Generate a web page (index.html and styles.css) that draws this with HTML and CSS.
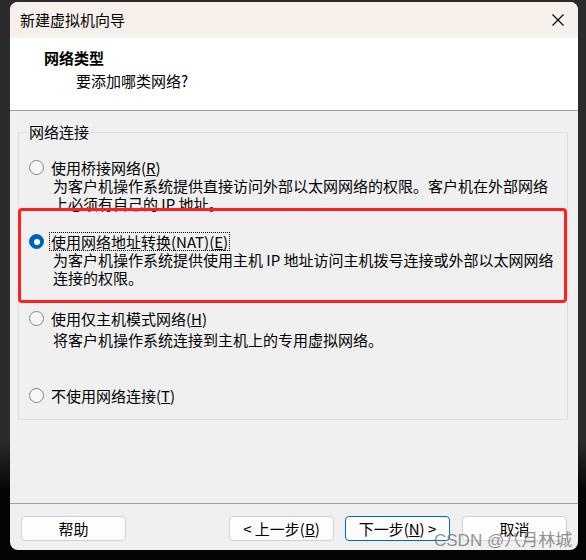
FILE: index.html
```html
<!DOCTYPE html>
<html lang="zh-CN">
<head>
<meta charset="utf-8">
<title>新建虚拟机向导</title>
<link rel="stylesheet" href="styles.css">
</head>
<body>
<div class="window">
  <div class="titlebar">
    <span class="title">新建虚拟机向导</span>
    <svg class="close" width="12" height="12" viewBox="0 0 12 12"><path d="M0.5 0.5 L11.5 11.5 M11.5 0.5 L0.5 11.5" stroke="#000" stroke-width="1.1" fill="none"/></svg>
  </div>
  <div class="header">
    <div class="h-title">网络类型</div>
    <div class="h-sub">要添加哪类网络?</div>
  </div>
  <div class="content">
    <div class="group">
      <div class="group-title">网络连接</div>
      <div class="options">
        <div class="option opt-a">
          <div class="row"><span class="radio"></span><span class="label">使用桥接网络(<u>R</u>)</span></div>
          <div class="desc">为客户机操作系统提供直接访问外部以太网网络的权限。客户机在外部网络<br>上必须有自己的 IP 地址。</div>
        </div>
        <div class="option opt-b">
          <div class="row"><span class="radio on"></span><span class="label focus">使用网络地址转换(NAT)(<u>E</u>)</span></div>
          <div class="desc">为客户机操作系统提供使用主机 IP 地址访问主机拨号连接或外部以太网网络<br>连接的权限。</div>
        </div>
        <div class="option opt-b">
          <div class="row"><span class="radio"></span><span class="label">使用仅主机模式网络(<u>H</u>)</span></div>
          <div class="desc desc-c">将客户机操作系统连接到主机上的专用虚拟网络。</div>
        </div>
        <div class="option">
          <div class="row"><span class="radio"></span><span class="label">不使用网络连接(<u>T</u>)</span></div>
        </div>
      </div>
    </div>
  </div>
  <div class="footer">
    <button class="btn">帮助</button>
    <div class="spacer"></div>
    <button class="btn">&lt; 上一步(<u>B</u>)</button>
    <button class="btn primary">下一步(<u>N</u>) &gt;</button>
    <button class="btn">取消</button>
  </div>
</div>
<div class="highlight"></div>
<div class="watermark">CSDN @八月林城</div>
</body>
</html>
```
FILE: styles.css
```css
html, body {
  margin: 0;
  padding: 0;
}
body {
  width: 586px;
  height: 560px;
  overflow: hidden;
  position: relative;
  background: linear-gradient(#2b2b2b 0, #2b2b2b 440px, #050505 490px);
  font-family: "Noto Sans CJK SC", "Noto Sans", sans-serif;
  font-size: 15px;
  color: #000;
}
.window {
  margin: 2px 0 0 10px;
  width: 568px;
  height: 548px;
  border-radius: 8px;
  overflow: hidden;
  background: #f0f0f0;
  display: flex;
  flex-direction: column;
}
.titlebar {
  height: 36px;
  flex: none;
  background: #f8f1eb;
  display: flex;
  align-items: center;
  justify-content: space-between;
  padding: 0 14px 0 10px;
}
.title {
  line-height: 18px;
}
.close {
  display: block;
}
.header {
  height: 72px;
  flex: none;
  background: #ffffff;
  border-bottom: 1px solid #a0a0a0;
  padding: 11px 0 0 34px;
  box-sizing: content-box;
  height: 61px;
}
.h-title {
  font-weight: bold;
  line-height: 18px;
}
.h-sub {
  line-height: 18px;
  margin: 5px 0 0 32px;
}
.content {
  flex: 1;
  padding: 21px 10px 0 8px;
}
.group {
  border: 1px solid #dcdcdc;
}
.group-title {
  margin: -10px 0 0 8px;
  padding: 0 2px;
  width: fit-content;
  background: #f0f0f0;
  line-height: 18px;
}
.options {
  padding: 17px 0 14px 10px;
}
.option {
  display: flex;
  flex-direction: column;
}
.opt-a {
  height: 74px;
}
.opt-b {
  height: 77px;
}
.row {
  display: flex;
  align-items: center;
  gap: 5px;
  height: 19px;
}
.radio {
  width: 15px;
  height: 15px;
  box-sizing: border-box;
  border-radius: 50%;
  border: 1px solid #858585;
  background: #f7f7f7;
  flex: none;
  display: flex;
  align-items: center;
  justify-content: center;
}
.radio.on {
  background: #005fb8;
  border-color: #005fb8;
}
.radio.on::after {
  content: "";
  width: 6px;
  height: 6px;
  border-radius: 50%;
  background: #ffffff;
}
.label {
  line-height: 17px;
  padding: 0 1px;
  border: 1px solid transparent;
  white-space: nowrap;
}
.label.focus {
  border: 1px dotted #000;
}
.desc {
  margin: 0 0 0 24px;
  line-height: 18px;
  white-space: nowrap;
}
.desc-c {
  margin-top: 3px;
}
.footer {
  flex: none;
  border-top: 1px solid #a0a0a0;
  padding: 12px 11px 9px 11px;
  display: flex;
  gap: 11px;
}
.spacer {
  flex: 1;
}
.btn {
  width: 105px;
  height: 25px;
  box-sizing: border-box;
  border: 1px solid #d0d0d0;
  border-radius: 4px;
  background: #fdfdfd;
  font-family: "Noto Sans CJK SC", "Noto Sans", sans-serif;
  font-size: 15px;
  line-height: 21px;
  color: #000;
  padding: 0;
}
.btn.primary {
  border-color: #0067c0;
}
.btn:last-child {
  margin-left: 1px;
}
.highlight {
  position: absolute;
  left: 18px;
  top: 208px;
  width: 549px;
  height: 95px;
  box-sizing: border-box;
  border: 3px solid #ff2020;
  border-radius: 4px;
}
.watermark {
  position: absolute;
  left: 434px;
  top: 531px;
  font-family: "Liberation Sans", "Noto Sans CJK SC", sans-serif;
  font-size: 17px;
  line-height: 20px;
  color: rgba(125, 125, 125, 0.85);
  white-space: nowrap;
}
```
